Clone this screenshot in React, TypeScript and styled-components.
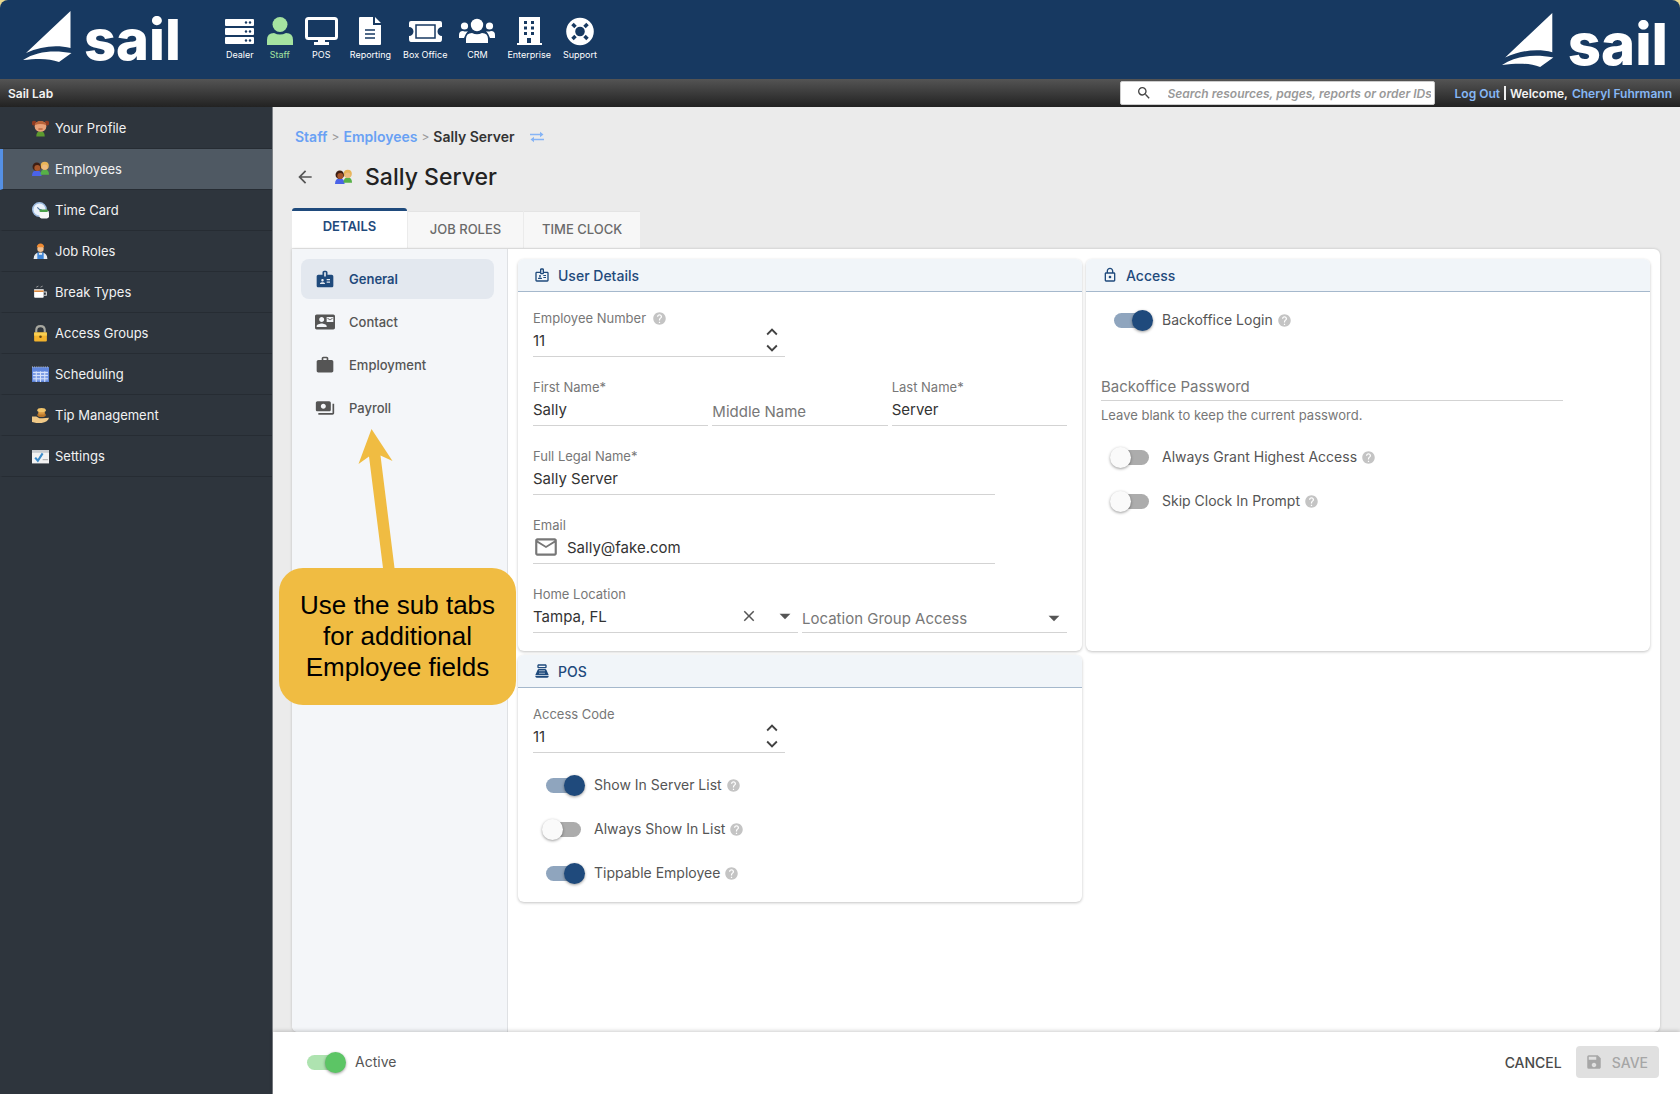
import React, { ReactNode, useState } from "react";
import styled, { createGlobalStyle } from "styled-components";
import {
  MdArrowBack,
  MdArrowDropDown,
  MdBadge,
  MdClose,
  MdContactMail,
  MdHelp,
  MdKeyboardArrowDown,
  MdKeyboardArrowUp,
  MdMailOutline,
  MdOutlineBadge,
  MdOutlineLock,
  MdPayments,
  MdPointOfSale,
  MdSave,
  MdSearch,
  MdWork,
} from "react-icons/md";

const navy = "#1f4a7c";

const GlobalStyle = createGlobalStyle`
  *, *::before, *::after { box-sizing: border-box; }
  body {
    margin: 0;
    background: #ead98f;
    color: #333;
    font-family: Inter, "Liberation Sans", sans-serif;
    font-size: 14px;
  }
  button, input, select { font: inherit; color: inherit; }
  h1, h2, p { margin: 0; }
  a { text-decoration: none; }
  svg { display: block; flex: none; }
`;

const Page = styled.div`
  min-height: 100vh;
  display: flex;
  flex-direction: column;
`;

/* ---------- header ---------- */

const Header = styled.header`
  height: 79px;
  flex: none;
  display: flex;
  align-items: flex-start;
  padding: 0 12px 0 23px;
  background: #173961;
  border-radius: 8px 8px 0 0;
`;

const LogoBox = styled.a<{ $size: "small" | "large" }>`
  display: flex;
  align-items: flex-start;
  gap: ${(p) => (p.$size === "large" ? 12 : 10)}px;
  padding-top: ${(p) => (p.$size === "large" ? 13 : 11)}px;
  color: #fff;
  font-weight: 800;
  font-size: ${(p) => (p.$size === "large" ? 58 : 56)}px;
  line-height: ${(p) => (p.$size === "large" ? 62 : 58)}px;
`;

const AppNav = styled.nav`
  flex: 1;
  display: flex;
  gap: 12px;
  padding: 16px 0 0 44px;
`;

const AppLink = styled.a<{ $active?: boolean }>`
  display: flex;
  flex-direction: column;
  align-items: center;
  color: ${(p) => (p.$active ? "#a5e3a0" : "#fff")};
  font-size: 9px;
  line-height: 14px;
`;

const SubBar = styled.div`
  height: 28px;
  flex: none;
  display: flex;
  align-items: center;
  padding: 0 8px;
  background: linear-gradient(#545454, #222);
  color: #f2f2f2;
  font-size: 12px;
  font-weight: 600;
`;

const SiteName = styled.span`
  flex: 1;
`;

const SearchBox = styled.label`
  display: flex;
  align-items: center;
  gap: 16px;
  width: 315px;
  height: 24px;
  margin-right: 20px;
  padding: 0 3px 0 15px;
  background: #fff;
  border: 1px solid #ccc;
  border-radius: 2px;
  color: #444;
`;

const SearchInput = styled.input`
  flex: 1;
  min-width: 0;
  padding: 0;
  border: 0;
  outline: 0;
  background: none;
  font-style: italic;
  font-weight: 600;
  &::placeholder { color: #999; opacity: 1; }
`;

const Account = styled.div`
  display: flex;
  align-items: center;
  gap: 4px;
`;

const AccountLink = styled.a`
  color: #86b7f5;
`;

const Divider = styled.span`
  width: 2px;
  height: 14px;
  background: #eee;
`;

/* ---------- side menu ---------- */

const Body = styled.div`
  flex: 1;
  display: flex;
`;

const Sidebar = styled.nav`
  width: 273px;
  flex: none;
  padding-top: 1px;
  background: #2e353d;
  border-right: 1px solid #7d8186;
`;

const SideLink = styled.a<{ $active?: boolean }>`
  display: flex;
  align-items: center;
  gap: 6px;
  height: 41px;
  padding-left: 29px;
  border-left: 3px solid ${(p) => (p.$active ? "#5590e4" : "transparent")};
  border-bottom: 1px solid #262c33;
  background: ${(p) => (p.$active ? "#4f5963" : "none")};
  color: #f1f2f3;
  font-size: 13px;
`;

/* ---------- content ---------- */

const Content = styled.div`
  flex: 1;
  min-width: 0;
  display: flex;
  flex-direction: column;
  background: #ebebeb;
`;

const Main = styled.main`
  flex: 1;
  display: flex;
  flex-direction: column;
  padding: 20px 20px 0 19px;
`;

const Breadcrumb = styled.nav`
  display: flex;
  align-items: center;
  gap: 4px;
  padding-left: 3px;
  font-weight: 600;
  line-height: 20px;
`;

const CrumbLink = styled.a`
  color: #69a1f4;
`;

const CrumbSep = styled.span`
  color: #999;
  font-size: 12px;
  font-weight: 400;
`;

const SwapButton = styled.button`
  padding: 0;
  margin-left: 11px;
  border: 0;
  background: none;
  color: #86b4f5;
`;

const TitleRow = styled.div`
  display: flex;
  align-items: center;
  padding: 15px 0 16px 3px;
`;

const BackButton = styled.button`
  margin-right: 20px;
  padding: 0;
  border: 0;
  background: none;
  color: #555;
`;

const Title = styled.h1`
  margin-left: 13px;
  font-size: 23px;
  font-weight: 500;
  line-height: 30px;
  color: #222;
`;

const Tabs = styled.div`
  display: flex;
  align-items: flex-end;
  gap: 1px;
`;

const Tab = styled.button<{ $active?: boolean }>`
  height: ${(p) => (p.$active ? 40 : 37)}px;
  min-width: 115px;
  padding: 0 18px;
  padding-bottom: ${(p) => (p.$active ? 8 : 2)}px;
  border: 0;
  border-top: ${(p) => (p.$active ? `3px solid ${navy}` : "1px solid #e4e4e4")};
  border-radius: ${(p) => (p.$active ? "3px 3px 0 0" : "0")};
  background: ${(p) => (p.$active ? "#fff" : "#f7f7f7")};
  color: ${(p) => (p.$active ? navy : "#6a6a6a")};
  font-size: 13px;
  font-weight: ${(p) => (p.$active ? 600 : 500)};
`;

const Panel = styled.section`
  flex: 1;
  display: flex;
  margin-top: 1px;
  background: #fff;
  border-radius: 0 6px 6px 6px;
  box-shadow: 0 0 3px rgba(0, 0, 0, 0.2);
`;

const SubNav = styled.nav`
  position: relative;
  width: 216px;
  flex: none;
  display: flex;
  flex-direction: column;
  gap: 3px;
  padding: 10px 13px 0 9px;
  background: #f4f6f9;
  border-right: 1px solid #dfe1e4;
  border-radius: 0 0 0 6px;
`;

const SubNavLink = styled.a<{ $active?: boolean }>`
  display: flex;
  align-items: center;
  gap: 14px;
  height: 40px;
  padding-left: 14px;
  border-radius: 8px;
  background: ${(p) => (p.$active ? "#e3e8ef" : "none")};
  color: ${(p) => (p.$active ? navy : "#555")};
  font-size: 13px;
  font-weight: ${(p) => (p.$active ? 600 : 500)};
`;

const Cards = styled.div`
  flex: 1;
  display: grid;
  grid-template-columns: repeat(2, minmax(0, 1fr));
  grid-auto-rows: max-content;
  gap: 4px;
  padding: 10px;
`;

const CardBox = styled.section`
  display: flex;
  flex-direction: column;
  background: #fff;
  border-radius: 6px;
  box-shadow: 0 1px 3px rgba(0, 0, 0, 0.24);
  overflow: hidden;
`;

const CardHead = styled.header`
  display: flex;
  align-items: center;
  gap: 8px;
  height: 33px;
  padding-left: 16px;
  background: #f1f5f9;
  border-bottom: 1px solid #a5b8cc;
  color: ${navy};
`;

const CardTitle = styled.h2`
  font-size: 14px;
  font-weight: 500;
`;

const CardBody = styled.div<{ $bottom: number }>`
  display: flex;
  flex-direction: column;
  gap: 20px;
  padding: 16px 15px ${(p) => p.$bottom}px;
`;

const Row = styled.div<{ $columns: number }>`
  display: grid;
  grid-template-columns: repeat(${(p) => p.$columns}, minmax(0, 1fr));
  gap: 4px;
`;

/* ---------- fields ---------- */

const FieldBox = styled.div<{ $width?: number }>`
  max-width: ${(p) => (p.$width ? `${p.$width}px` : "none")};
  height: 49px;
  display: flex;
  flex-direction: column;
  justify-content: flex-end;
  border-bottom: 1px solid #d3d3d3;
`;

const FieldLabel = styled.label`
  display: flex;
  align-items: center;
  gap: 6px;
  color: #777;
  font-size: 13px;
  line-height: 20px;
`;

const FieldLine = styled.div<{ $empty?: boolean }>`
  display: flex;
  align-items: center;
  height: ${(p) => (p.$empty ? 28 : 24)}px;
  margin-bottom: ${(p) => (p.$empty ? 0 : 4)}px;
  color: #777;
  font-size: 15px;
`;

const TextInput = styled.input`
  flex: 1;
  min-width: 0;
  padding: 0;
  border: 0;
  outline: 0;
  background: none;
  color: #333;
  &::placeholder { color: #777; opacity: 1; }
`;

const SelectInput = styled.select<{ $empty?: boolean }>`
  flex: 1;
  min-width: 0;
  padding: 0;
  border: 0;
  outline: 0;
  appearance: none;
  background: none;
  color: ${(p) => (p.$empty ? "#777" : "#333")};
`;

const SelectArrow = styled.span`
  display: flex;
  color: #555;
`;

const IconButton = styled.button`
  padding: 0;
  margin-right: 14px;
  border: 0;
  background: none;
  color: #555;
`;

const MailIcon = styled.span`
  display: flex;
  padding-right: 8px;
`;

const Stepper = styled.div`
  display: flex;
  flex-direction: column;
  padding-right: 2px;
`;

const StepButton = styled.button`
  height: 16px;
  display: flex;
  align-items: center;
  padding: 0;
  border: 0;
  background: none;
  color: #444;
`;

const Hint = styled.p`
  margin-top: 4px;
  color: #777;
  font-size: 13px;
  line-height: 20px;
`;

/* ---------- switches ---------- */

const SwitchList = styled.div`
  display: flex;
  flex-direction: column;
  padding-left: 9px;
`;

const SwitchRow = styled.label`
  display: flex;
  align-items: center;
  height: 44px;
  color: #555;
  line-height: 20px;
`;

const SwitchInput = styled.input<{ $track: string; $thumb: string }>`
  position: relative;
  appearance: none;
  width: 43px;
  height: 21px;
  margin: 0 9px 0 0;
  flex: none;
  &::before {
    content: "";
    position: absolute;
    left: 4px;
    top: 3px;
    width: 35px;
    height: 15px;
    border-radius: 8px;
    background: #acacac;
  }
  &::after {
    content: "";
    position: absolute;
    left: 0;
    top: 0;
    width: 21px;
    height: 21px;
    border-radius: 50%;
    background: #fafafa;
    box-shadow: 0 1px 3px rgba(0, 0, 0, 0.4);
  }
  &:checked::before { background: ${(p) => p.$track}; }
  &:checked::after { left: 22px; background: ${(p) => p.$thumb}; }
`;

const HelpMark = styled(MdHelp).attrs({ size: 15 })`
  color: #c4c4c4;
`;

const SwitchText = styled.span`
  display: flex;
  align-items: center;
  gap: 4px;
`;

const Gap = styled.div`
  height: 10px;
`;

const SwitchBody = styled.div`
  padding: 6px 15px 7px;
`;

/* ---------- footer ---------- */

const Footer = styled.footer`
  position: relative;
  display: flex;
  align-items: center;
  height: 62px;
  padding: 0 21px 2px 30px;
  background: #fff;
  box-shadow: 0 -1px 4px rgba(0, 0, 0, 0.2);
`;

const Spacer = styled.div`
  flex: 1;
`;

const CancelButton = styled.button`
  margin-right: 8px;
  padding: 6px;
  border: 0;
  background: none;
  color: #4a4a4a;
  font-weight: 500;
`;

const SaveButton = styled.button`
  display: flex;
  align-items: center;
  gap: 9px;
  height: 32px;
  padding: 0 11px 0 9px;
  border: 0;
  border-radius: 4px;
  background: #e0e0e0;
  color: #a6a6a6;
  font-weight: 500;
`;

/* ---------- callout ---------- */

const Callout = styled.aside`
  position: absolute;
  left: -13px;
  top: 180px;
  width: 237px;
`;

const CalloutText = styled.p`
  padding: 22px 10px;
  border-radius: 24px;
  background: #f0bc42;
  color: #000;
  font-family: "Liberation Sans", Arial, sans-serif;
  font-size: 26px;
  line-height: 31px;
  text-align: center;
`;

/* ---------- drawings ---------- */

const Sail = ({ height }: { height: number }) => (
  <svg width={height} height={height} viewBox="0 0 51 51" fill="currentColor" aria-hidden="true">
    <path d="M47.500 0V37C34 33.500 18 35 3 42Z" />
    <path d="M0 49C14 40 31 39 48.500 42L36 51C26 47 14 47.500 0 49Z" />
  </svg>
);

const Logo = ({ size }: { size: "small" | "large" }) => (
  <LogoBox href="#home" $size={size}>
    <Sail height={size === "large" ? 54 : 51} />
    <span>sail</span>
  </LogoBox>
);

const DealerIcon = () => (
  <svg width="30" height="32" viewBox="0 0 30 32" aria-hidden="true">
    {[3, 12, 21].map((y) => (
      <g key={y}>
        <rect x="0" y={y} width="29" height="7" rx="1" fill="currentColor" />
        <circle cx="21" cy={y + 3.5} r="1.200" fill="#173961" />
        <circle cx="25" cy={y + 3.5} r="1.200" fill="#173961" />
      </g>
    ))}
  </svg>
);
const StaffIcon = () => (
  <svg width="26" height="32" viewBox="0 0 26 32" fill="currentColor" aria-hidden="true">
    <ellipse cx="13" cy="8.500" rx="7.500" ry="7.500" />
    <path d="M0 29V24Q0 17 7 17Q13 20 19 17Q26 17 26 24V29Z" />
  </svg>
);
const PosIcon = () => (
  <svg width="33" height="32" viewBox="0 0 33 32" aria-hidden="true">
    <rect x="1.500" y="2.500" width="30" height="20" rx="2" fill="none" stroke="currentColor" strokeWidth="3" />
    <path d="M13 23h7v3h4v3H9v-3h4z" fill="currentColor" />
  </svg>
);
const ReportIcon = () => (
  <svg width="22" height="32" viewBox="0 0 22 32" aria-hidden="true">
    <path d="M1 1h13v8h8v19a1 1 0 0 1-1 1H1a1 1 0 0 1-1-1V2a1 1 0 0 1 1-1zM16 1l6 6h-6z" fill="currentColor" />
    <path d="M6 14h10M6 18h10M6 22h10" stroke="#173961" strokeWidth="1.500" />
  </svg>
);
const TicketIcon = () => (
  <svg width="33" height="32" viewBox="0 0 33 32" aria-hidden="true">
    <path d="M2 5h29q2 0 2 2v4a4.500 4.500 0 0 0 0 9v3q0 3-2 3H2q-2 0-2-3v-3a4.500 4.500 0 0 0 0-9V7q0-2 2-2z" fill="currentColor" />
    <rect x="7" y="9" width="19" height="13" fill="none" stroke="#173961" strokeWidth="1.500" />
  </svg>
);
const CrmIcon = () => (
  <svg width="36" height="32" viewBox="0 0 36 32" fill="currentColor" aria-hidden="true">
    <circle cx="18" cy="9" r="6.200" />
    <circle cx="5.500" cy="10" r="3.600" />
    <circle cx="30.500" cy="10" r="3.600" />
    <path d="M7 27v-4q0-6 6-6 5 2.500 10 0 6 0 6 6v4zM0 22v-3q0-4 4-4 3 1 5 0-2 2-4 7zM36 22v-3q0-4-4-4-3 1-5 0 2 2 4 7z" />
  </svg>
);
const EnterpriseIcon = () => (
  <svg width="25" height="32" viewBox="0 0 25 32" aria-hidden="true">
    <path d="M2 1h21v26h2v2H0v-2h2z" fill="currentColor" />
    <path d="M7 5h3v3H7zM14 5h3v3h-3zM7 10.500h3v3H7zM14 10.500h3v3h-3zM7 16h3v3H7zM14 16h3v3h-3zM10 22h4v5h-4z" fill="#173961" />
  </svg>
);
const SupportIcon = () => (
  <svg width="28" height="32" viewBox="0 0 28 32" aria-hidden="true">
    <circle cx="14" cy="15.500" r="9.300" fill="none" stroke="currentColor" strokeWidth="9" />
    <path d="M6.500 8l3 3M21.500 8l-3 3M6.500 23l3-3M21.500 23l-3-3" stroke="#173961" strokeWidth="3.500" />
  </svg>
);

const Icon16 = ({ children }: { children: ReactNode }) => (
  <svg width="17" height="17" viewBox="0 0 16 16" aria-hidden="true">{children}</svg>
);
const ProfileArt = () => (
  <Icon16>
    <path d="M4 15.500q0-5 4-5t4 5z" fill="#5c9a2f" />
    <circle cx="2" cy="3" r="2.200" fill="#8e3b22" /><circle cx="14" cy="3" r="2.200" fill="#8e3b22" />
    <ellipse cx="8" cy="6" rx="5.500" ry="5" fill="#e8a27a" />
    <path d="M2.500 5Q4 1 8 1t5.500 4Q8 2.500 2.500 5z" fill="#b9643a" />
    <path d="M6 8.500h4" stroke="#a8502c" />
  </Icon16>
);
const PeopleArt = () => (
  <Icon16>
    <path d="M0 14q0-5 4.500-5T9 14z" fill="#4a63e8" />
    <path d="M8 13q0-5 4-5t4 5z" fill="#57b147" />
    <circle cx="4.500" cy="5.500" r="4" fill="#3f1e12" /><circle cx="5" cy="6.500" r="2.800" fill="#a8572b" />
    <circle cx="12" cy="4.500" r="3.800" fill="#e8b458" /><circle cx="12" cy="5.800" r="2.500" fill="#eebc80" />
  </Icon16>
);
const ClockArt = () => (
  <Icon16>
    <circle cx="7" cy="7" r="6.300" fill="#eaf2fb" stroke="#9dbbe0" strokeWidth="1.400" />
    <path d="M5 5l2 2h2" stroke="#4c6f9c" fill="none" />
    <rect x="7" y="8" width="9" height="7.500" rx="2" fill="#f6f6f6" />
    <rect x="7" y="7" width="8" height="2.500" rx="1" fill="#4ba04a" />
  </Icon16>
);
const WorkerArt = () => (
  <Icon16>
    <path d="M1.500 15q0-6 6.500-6t6.500 6z" fill="#e9ecef" />
    <path d="M5 9h1.500v2h3V9H11v6H5z" fill="#3f86d8" />
    <circle cx="8" cy="5.500" r="3" fill="#f0c193" />
    <path d="M4.500 4Q5 .5 8 .5T11.500 4z" fill="#ef8b33" />
  </Icon16>
);
const CupArt = () => (
  <Icon16>
    <path d="M2 5h9v7q0 1-1 1H3q-1 0-1-1z" fill="#fff" />
    <path d="M2 6h9v1.500H2z" fill="#d98539" />
    <path d="M11 7.500h2.500v3H11" fill="none" stroke="#ddd" />
    <path d="M4 3l2-1M8 3l2-1" stroke="#aaa" strokeWidth=".8" />
  </Icon16>
);
const PadlockArt = () => (
  <Icon16>
    <path d="M4 7V5q0-4 4-4t4 4v2" fill="none" stroke="#a8a8a0" strokeWidth="2" />
    <rect x="2" y="7" width="12" height="8.500" rx="1" fill="#f3b32c" />
    <rect x="2" y="7" width="12" height="3" fill="#f9cf52" />
    <circle cx="8" cy="11" r="1.200" fill="#614413" />
  </Icon16>
);
const CalendarArt = () => (
  <Icon16>
    <rect x="0" y="1" width="16" height="14" fill="#5f86dd" />
    <path d="M1 6h14v8H1z" fill="#7f9fe6" />
    <path d="M1 6h14M1 9h14M1 12h14M4 5v10M8 5v10M12 5v10" stroke="#d5e1fb" />
    <path d="M0 1h16" stroke="#c2c9d8" strokeDasharray="1 1" />
  </Icon16>
);
const TipArt = () => (
  <Icon16>
    <ellipse cx="9" cy="7.500" rx="4" ry="2" fill="#b9772b" />
    <rect x="6" y="4" width="6" height="3" rx="1" fill="#d7963f" />
    <ellipse cx="9" cy="3" rx="4" ry="2" fill="#f2c46a" />
    <path d="M0 9h4l3 1.500h3l6-.5q-1 4-7 5H4l-4-1z" fill="#f0c987" />
  </Icon16>
);
const SettingsArt = () => (
  <Icon16>
    <rect x="0" y="2" width="16" height="12.500" fill="#f2f2f2" />
    <rect x="0" y="2" width="16" height="2.500" fill="#c9ccd0" />
    <path d="M3 9l2.500 3L10 5" fill="none" stroke="#3b8bc9" strokeWidth="2" />
    <path d="M10 11h5" stroke="#aaa" />
  </Icon16>
);

const SwapIcon = () => (
  <svg width="14" height="12" viewBox="0 0 14 12" fill="none" stroke="currentColor" strokeWidth="1.400" aria-hidden="true">
    <path d="M0 3.500h12M2 8.500h12" />
    <path d="M10 .8l3.500 2.700L10 6.200zM4 5.800L.5 8.500 4 11.200z" fill="currentColor" stroke="none" />
  </svg>
);

const CalloutArrow = () => (
  <svg width="237" height="139" viewBox="0 0 237 139" fill="#f0bc42" aria-hidden="true">
    <path d="M92.500 0L113.500 32L101.500 26.500L115.500 139H104L90 27.500L79.500 35Z" />
  </svg>
);

/* ---------- parts ---------- */

const Card = ({ icon, title, children }: { icon: ReactNode; title: string; children: ReactNode }) => (
  <CardBox>
    <CardHead>
      {icon}
      <CardTitle>{title}</CardTitle>
    </CardHead>
    {children}
  </CardBox>
);

type FieldProps = {
  id: string;
  label: string;
  value?: string;
  width?: number;
  help?: boolean;
  stepper?: boolean;
  type?: string;
  icon?: ReactNode;
};

const Field = ({ id, label, value, width, help, stepper, type = "text", icon }: FieldProps) => {
  const [text, setText] = useState(value ?? "");
  const filled = value !== undefined;
  const step = (by: number) => setText(String(Number(text) + by));
  return (
    <FieldBox $width={width}>
      {filled && (
        <FieldLabel htmlFor={id}>
          {label}
          {help && <HelpMark />}
        </FieldLabel>
      )}
      <FieldLine $empty={!filled}>
        {icon && <MailIcon>{icon}</MailIcon>}
        <TextInput
          id={id}
          type={type}
          value={text}
          placeholder={filled ? undefined : label}
          aria-label={filled ? undefined : label}
          onChange={(e) => setText(e.target.value)}
        />
        {stepper && (
          <Stepper>
            <StepButton type="button" aria-label={`Increase ${label}`} onClick={() => step(1)}>
              <MdKeyboardArrowUp size={22} />
            </StepButton>
            <StepButton type="button" aria-label={`Decrease ${label}`} onClick={() => step(-1)}>
              <MdKeyboardArrowDown size={22} />
            </StepButton>
          </Stepper>
        )}
      </FieldLine>
    </FieldBox>
  );
};

type SwitchProps = { label: string; on?: boolean; help?: boolean; green?: boolean };

const Switch = ({ label, on, help, green }: SwitchProps) => (
  <SwitchRow>
    <SwitchInput
      type="checkbox"
      defaultChecked={on}
      $track={green ? "#aee3b0" : "#8fa5be"}
      $thumb={green ? "#5cc565" : navy}
    />
    <SwitchText>
      {label}
      {help && <HelpMark />}
    </SwitchText>
  </SwitchRow>
);

const apps: [string, ReactNode][] = [
  ["Dealer", <DealerIcon />],
  ["Staff", <StaffIcon />],
  ["POS", <PosIcon />],
  ["Reporting", <ReportIcon />],
  ["Box Office", <TicketIcon />],
  ["CRM", <CrmIcon />],
  ["Enterprise", <EnterpriseIcon />],
  ["Support", <SupportIcon />],
];

const menu: [string, ReactNode][] = [
  ["Your Profile", <ProfileArt />],
  ["Employees", <PeopleArt />],
  ["Time Card", <ClockArt />],
  ["Job Roles", <WorkerArt />],
  ["Break Types", <CupArt />],
  ["Access Groups", <PadlockArt />],
  ["Scheduling", <CalendarArt />],
  ["Tip Management", <TipArt />],
  ["Settings", <SettingsArt />],
];

const sections: [string, ReactNode][] = [
  ["General", <MdBadge size={20} />],
  ["Contact", <MdContactMail size={20} />],
  ["Employment", <MdWork size={20} />],
  ["Payroll", <MdPayments size={20} />],
];

export default function App() {
  return (
    <Page>
      <GlobalStyle />
      <Header>
        <Logo size="small" />
        <AppNav>
          {apps.map(([name, icon]) => (
            <AppLink key={name} href="#app" $active={name === "Staff"}>
              {icon}
              {name}
            </AppLink>
          ))}
        </AppNav>
        <Logo size="large" />
      </Header>

      <SubBar>
        <SiteName>Sail Lab</SiteName>
        <SearchBox>
          <MdSearch size={16} />
          <SearchInput type="text" aria-label="Search" placeholder="Search resources, pages, reports or order IDs" />
        </SearchBox>
        <Account>
          <AccountLink href="#logout">Log Out</AccountLink>
          <Divider />
          <span>Welcome,</span>
          <AccountLink href="#me">Cheryl Fuhrmann</AccountLink>
        </Account>
      </SubBar>

      <Body>
        <Sidebar>
          {menu.map(([name, icon]) => (
            <SideLink key={name} href="#menu" $active={name === "Employees"}>
              {icon}
              {name}
            </SideLink>
          ))}
        </Sidebar>

        <Content>
          <Main>
            <Breadcrumb>
              <CrumbLink href="#staff">Staff</CrumbLink>
              <CrumbSep>&gt;</CrumbSep>
              <CrumbLink href="#employees">Employees</CrumbLink>
              <CrumbSep>&gt;</CrumbSep>
              <span>Sally Server</span>
              <SwapButton type="button" aria-label="Switch employee">
                <SwapIcon />
              </SwapButton>
            </Breadcrumb>

            <TitleRow>
              <BackButton type="button" aria-label="Back">
                <MdArrowBack size={20} />
              </BackButton>
              <PeopleArt />
              <Title>Sally Server</Title>
            </TitleRow>

            <Tabs>
              <Tab type="button" $active>DETAILS</Tab>
              <Tab type="button">JOB ROLES</Tab>
              <Tab type="button">TIME CLOCK</Tab>
            </Tabs>

            <Panel>
              <SubNav>
                {sections.map(([name, icon]) => (
                  <SubNavLink key={name} href="#section" $active={name === "General"}>
                    {icon}
                    {name}
                  </SubNavLink>
                ))}
                <Callout>
                  <CalloutArrow />
                  <CalloutText>Use the sub tabs for additional Employee fields</CalloutText>
                </Callout>
              </SubNav>

              <Cards>
                <Card icon={<MdOutlineBadge size={16} />} title="User Details">
                  <CardBody $bottom={18}>
                    <Field id="number" label="Employee Number" value="11" width={252} help stepper />
                    <Row $columns={3}>
                      <Field id="first" label="First Name*" value="Sally" />
                      <Field id="middle" label="Middle Name" />
                      <Field id="last" label="Last Name*" value="Server" />
                    </Row>
                    <Field id="legal" label="Full Legal Name*" value="Sally Server" width={462} />
                    <Field
                      id="email"
                      label="Email"
                      type="email"
                      value="Sally@fake.com"
                      width={462}
                      icon={<MdMailOutline size={26} />}
                    />
                    <Row $columns={2}>
                      <FieldBox>
                        <FieldLabel htmlFor="home">Home Location</FieldLabel>
                        <FieldLine>
                          <SelectInput id="home">
                            <option>Tampa, FL</option>
                          </SelectInput>
                          <IconButton type="button" aria-label="Clear home location">
                            <MdClose size={18} />
                          </IconButton>
                          <SelectArrow>
                            <MdArrowDropDown size={26} />
                          </SelectArrow>
                        </FieldLine>
                      </FieldBox>
                      <FieldBox>
                        <FieldLine $empty>
                          <SelectInput $empty aria-label="Location Group Access">
                            <option>Location Group Access</option>
                          </SelectInput>
                          <SelectArrow>
                            <MdArrowDropDown size={26} />
                          </SelectArrow>
                        </FieldLine>
                      </FieldBox>
                    </Row>
                  </CardBody>
                </Card>

                <Card icon={<MdOutlineLock size={16} />} title="Access">
                  <SwitchBody>
                    <SwitchList>
                      <Switch label="Backoffice Login" on help />
                    </SwitchList>
                    <Gap />
                    <Field id="password" type="password" label="Backoffice Password" width={462} />
                    <Hint>Leave blank to keep the current password.</Hint>
                    <Gap />
                    <SwitchList>
                      <Switch label="Always Grant Highest Access" help />
                      <Switch label="Skip Clock In Prompt" help />
                    </SwitchList>
                  </SwitchBody>
                </Card>

                <Card icon={<MdPointOfSale size={16} />} title="POS">
                  <CardBody $bottom={4}>
                    <Field id="code" label="Access Code" value="11" width={252} stepper />
                  </CardBody>
                  <SwitchBody>
                    <SwitchList>
                      <Switch label="Show In Server List" on help />
                      <Switch label="Always Show In List" help />
                      <Switch label="Tippable Employee" on help />
                    </SwitchList>
                  </SwitchBody>
                </Card>
              </Cards>
            </Panel>
          </Main>

          <Footer>
            <Switch label="Active" on green />
            <Spacer />
            <CancelButton type="button">CANCEL</CancelButton>
            <SaveButton type="button" disabled>
              <MdSave size={18} />
              SAVE
            </SaveButton>
          </Footer>
        </Content>
      </Body>
    </Page>
  );
}
